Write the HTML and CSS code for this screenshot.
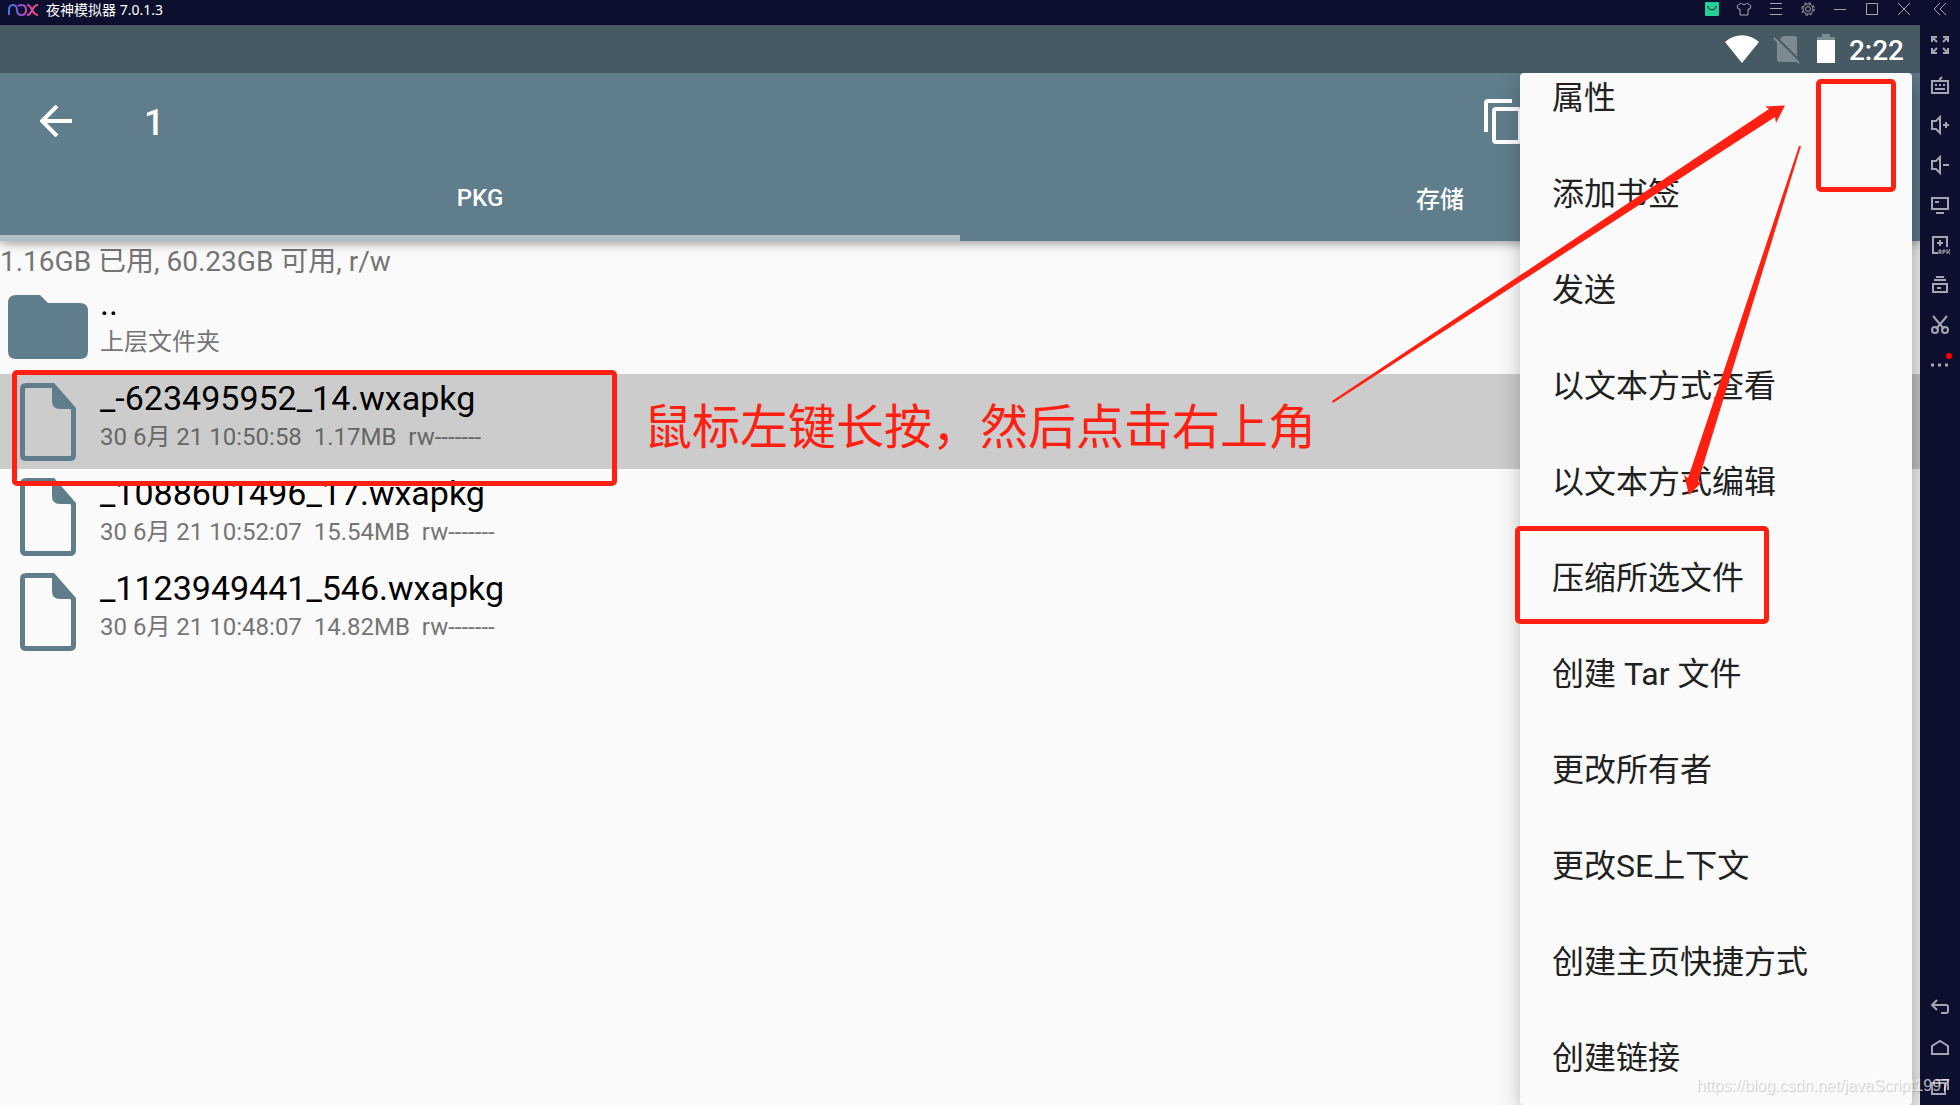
FILE: index.html
```html
<!DOCTYPE html>
<html lang="zh-CN">
  <head>
    <meta charset="utf-8">
    <title>夜神模拟器 7.0.1.3</title>
    <link rel="stylesheet" href="styles.css">
  </head>
  <body>
    <header class="titlebar">
      <svg class="logo" width="32" height="12" viewBox="0 0 32 12" fill="none" stroke-width="2">
        <defs>
          <linearGradient id="nox" gradientUnits="userSpaceOnUse" x1="0" y1="0" x2="32" y2="0">
            <stop offset="0" stop-color="#2f7bf5" />
            <stop offset="0.5" stop-color="#9a50c8" />
            <stop offset="0.75" stop-color="#e8468f" />
            <stop offset="1" stop-color="#e8468f" />
          </linearGradient>
        </defs>
        <path stroke="url(#nox)" d="M2 11V6Q2 1 6 1T10 6Q10 11 14.500 11T19 6Q19 1 14.500 1Q12 1 11 2M20 1C26 1 24 11 31 11M20 11C26 11 24 1 31 1" />
      </svg>
      <span class="app-name">夜神模拟器 7.0.1.3</span>
      <div class="window-buttons">
        <button aria-label="应用中心">
          <svg width="14" height="14" viewBox="0 0 14 14"><rect width="14" height="14" rx="1" fill="#26cf98" stroke="none" /><path d="M3 4c0 5 8 5 8 0" fill="none" stroke="#0c0f2e" /></svg>
        </button>
        <button aria-label="皮肤">
          <svg width="16" height="14" viewBox="0 0 16 14"><path d="M5 1L1 4l1 3h2v6h8V7h2l1-3-4-3c-1 2-5 2-6 0z" /></svg>
        </button>
        <button aria-label="菜单">
          <svg width="12" height="12" viewBox="0 0 12 12"><path d="M0 .5h12M0 5.500h12M0 11.500h12" /></svg>
        </button>
        <button aria-label="设置">
          <svg width="14" height="14" viewBox="0 0 14 14"><circle cx="7" cy="7" r="5" /><circle cx="7" cy="7" r="2.500" /><circle cx="7" cy="7" r="6.300" stroke-dasharray="2.500 2.450" /></svg>
        </button>
        <button aria-label="最小化">
          <svg width="12" height="12" viewBox="0 0 12 12"><path d="M0 6.500h12" /></svg>
        </button>
        <button aria-label="最大化">
          <svg width="12" height="12" viewBox="0 0 12 12"><path d="M.5.5h11v11H.5z" /></svg>
        </button>
        <button aria-label="关闭">
          <svg width="12" height="12" viewBox="0 0 12 12"><path d="M0 0l12 12M12 0L0 12" /></svg>
        </button>
        <button class="collapse" aria-label="收起">
          <svg width="14" height="12" viewBox="0 0 14 12"><path d="M7 0L1 6l6 6M13 0L7 6l6 6" /></svg>
        </button>
      </div>
    </header>

    <div class="emulator">
      <main class="screen">
        <div class="status-bar">
          <svg width="36" height="30" viewBox="0 0 36 30"><path d="M1 8C11-1 25-1 35 8L18 29z" fill="#fff" /></svg>
          <svg class="sim" width="28" height="30" viewBox="0 0 28 30"><path d="M11 2h12q2 0 2 2v22q0 2-2 2H7q-2 0-2-2V8z" fill="#7c8b92" /><path d="M3 2l25 25" stroke="#475a64" stroke-width="2" /><path d="M2 4l25 25" stroke="#7c8b92" stroke-width="2" /></svg>
          <svg class="battery" width="20" height="30" viewBox="0 0 20 30"><path d="M6 0h8v3h5v4H1V3h5z" fill="#7c8b92" /><path d="M1 6h18v23H1z" fill="#fff" /></svg>
          <span class="clock">2:22</span>
        </div>

        <div class="app-bar">
          <div class="toolbar">
            <button class="back" aria-label="返回">
              <svg width="32" height="32" viewBox="0 0 32 32"><path d="M32 16H3M17 1L2 16l15 15" fill="none" stroke="#fff" stroke-width="4" /></svg>
            </button>
            <span class="count">1</span>
            <button class="copy" aria-label="复制">
              <svg width="44" height="46" viewBox="0 0 44 46" fill="none" stroke="#fff" stroke-width="4"><path d="M2 33V4q0-2 2-2h24" /><rect x="10" y="10" width="26" height="33" rx="2" /></svg>
            </button>
          </div>
          <nav class="tabs">
            <button class="tab active">PKG</button>
            <button class="tab">存储</button>
          </nav>
        </div>

        <p class="disk-info">1.16GB 已用, 60.23GB 可用, r/w</p>
        <ul class="files">
          <li class="file">
            <svg width="80" height="64" viewBox="0 0 80 64"><path d="M8 0h24l8 8h32q8 0 8 8v40q0 8-8 8H8q-8 0-8-8V8q0-8 8-8z" fill="#607d8b" /></svg>
            <div class="file-text">
              <div class="file-name">..</div>
              <div class="file-meta">上层文件夹</div>
            </div>
          </li>
          <li class="file selected">
            <svg width="80" height="78" viewBox="0 0 80 78"><path d="M17 2.500h28L65.500 26v46q0 3.500-3.500 3.500H18q-3.500 0-3.500-3.500V6q0-3.500 3.500-3.500z" fill="none" stroke="#607d8b" stroke-width="5" /><path d="M44 2l23 24H52q-8 0-8-8z" fill="#607d8b" /></svg>
            <div class="file-text">
              <div class="file-name">_-623495952_14.wxapkg</div>
              <div class="file-meta">30 6月 21 10:50:58&nbsp; 1.17MB&nbsp; rw-------</div>
            </div>
          </li>
          <li class="file">
            <svg width="80" height="78" viewBox="0 0 80 78"><path d="M17 2.500h28L65.500 26v46q0 3.500-3.500 3.500H18q-3.500 0-3.500-3.500V6q0-3.500 3.500-3.500z" fill="none" stroke="#607d8b" stroke-width="5" /><path d="M44 2l23 24H52q-8 0-8-8z" fill="#607d8b" /></svg>
            <div class="file-text">
              <div class="file-name">_1088601496_17.wxapkg</div>
              <div class="file-meta">30 6月 21 10:52:07&nbsp; 15.54MB&nbsp; rw-------</div>
            </div>
          </li>
          <li class="file">
            <svg width="80" height="78" viewBox="0 0 80 78"><path d="M17 2.500h28L65.500 26v46q0 3.500-3.500 3.500H18q-3.500 0-3.500-3.500V6q0-3.500 3.500-3.500z" fill="none" stroke="#607d8b" stroke-width="5" /><path d="M44 2l23 24H52q-8 0-8-8z" fill="#607d8b" /></svg>
            <div class="file-text">
              <div class="file-name">_1123949441_546.wxapkg</div>
              <div class="file-meta">30 6月 21 10:48:07&nbsp; 14.82MB&nbsp; rw-------</div>
            </div>
          </li>
        </ul>

        <div class="menu">
          <div class="menu-list">
            <button>属性</button>
            <button>添加书签</button>
            <button>发送</button>
            <button>以文本方式查看</button>
            <button>以文本方式编辑</button>
            <button>压缩所选文件</button>
            <button>创建 Tar 文件</button>
            <button>更改所有者</button>
            <button>更改SE上下文</button>
            <button>创建主页快捷方式</button>
            <button>创建链接</button>
          </div>
        </div>
      </main>

      <aside class="sidebar">
        <button aria-label="全屏">
          <svg width="20" height="20" viewBox="0 0 20 20"><path d="M2 7V2h5M2 2l5 5M13 2h5v5M18 2l-5 5M2 13v5h5M2 18l5-5M18 13v5h-5M18 18l-5-5" /></svg>
        </button>
        <button aria-label="键盘">
          <svg width="20" height="20" viewBox="0 0 20 20"><path d="M2 6h16v12H2zM10 6V4l2-2M5 10h2M9 10h2M13 10h2M5 14h10" /></svg>
        </button>
        <button aria-label="音量加">
          <svg width="20" height="20" viewBox="0 0 20 20"><path d="M10 2v16l-4-4H2V6h4zM13 10h6M16 7v6" /></svg>
        </button>
        <button aria-label="音量减">
          <svg width="20" height="20" viewBox="0 0 20 20"><path d="M10 2v16l-4-4H2V6h4zM13 10h6" /></svg>
        </button>
        <button aria-label="屏幕">
          <svg width="20" height="20" viewBox="0 0 20 20"><path d="M2 3h16v11H2zM5 7h4M6 18h8" /></svg>
        </button>
        <button aria-label="安装APK">
          <svg width="20" height="20" viewBox="0 0 20 20"><path d="M8 18H3V2h14v10M7 8h6M10 5v6" /><path d="M9 19v-4h2v4M9 17h2M13 19v-4h2v2h-2M17 14v5M19.500 14v2l-2 1 2 1v1" stroke-width="1" /></svg>
        </button>
        <button aria-label="多开">
          <svg width="20" height="20" viewBox="0 0 20 20"><path d="M6 2h8M4 5h12M3 9h14v8H3zM7 13h4" /></svg>
        </button>
        <button aria-label="截图">
          <svg width="20" height="20" viewBox="0 0 20 20"><path d="M3 1l11 13M17 1L6 14" /><circle cx="5" cy="15" r="3" /><circle cx="15" cy="15" r="3" /></svg>
        </button>
        <button class="more" aria-label="更多">
          <svg width="20" height="20" viewBox="0 0 20 20"><path d="M1 10h3M8 10h3M15 10h3" stroke-width="3" /></svg>
        </button>
        <div class="nav-keys">
          <button aria-label="后退">
            <svg width="20" height="20" viewBox="0 0 20 20"><path d="M7 3L2 8l5 5M2 8h14q2 0 2 2v4q0 2-2 2h-5" /></svg>
          </button>
          <button aria-label="主页">
            <svg width="20" height="20" viewBox="0 0 20 20"><path d="M2 9l8-5 8 5v8H2z" /></svg>
          </button>
          <button aria-label="最近任务">
            <svg width="20" height="20" viewBox="0 0 20 20"><path d="M2 6h13v11H2zM6 3h12v10" /></svg>
          </button>
        </div>
      </aside>
    </div>

    <!-- red marks drawn over the window -->
    <div class="mark mark-file"></div>
    <div class="mark mark-more"></div>
    <div class="mark mark-zip"></div>
    <p class="note">鼠标左键长按，然后点击右上角</p>
    <svg class="arrows" width="480" height="400" viewBox="1330 100 480 400" fill="#ff2012">
      <path d="M1332 401L1769 109l-4-2.500 20-1-9 17.500-1-6L1333 403z" />
      <path d="M1799 146l-111 332-4-3 5 20 14-14-5 1L1801 146z" />
    </svg>
    <span class="watermark">https://blog.csdn.net/javaScript1997</span>
  </body>
</html>
```
FILE: styles.css
```css
* {
  box-sizing: border-box;
}
body {
  position: relative;
  display: flex;
  flex-direction: column;
  height: 100vh;
  margin: 0;
  overflow: hidden;
  font-family: Roboto, "Noto Sans CJK SC", sans-serif;
  background: #0c0f2e;
}
button {
  padding: 0;
  border: none;
  background: none;
  font: inherit;
  color: inherit;
  cursor: pointer;
}
svg {
  display: block;
  flex: none;
}
p,
ul {
  margin: 0;
  padding: 0;
  list-style: none;
}

/* emulator window */
.titlebar {
  display: flex;
  align-items: flex-start;
  height: 25px;
  padding-left: 7px;
  color: #fff;
}
.logo {
  margin-top: 4px;
}
.app-name {
  margin-left: 7px;
  font-family: "Noto Sans", "Noto Sans CJK SC", sans-serif;
  font-size: 14px;
  line-height: 20px;
}
.window-buttons {
  display: flex;
  margin-left: auto;
}
.window-buttons button {
  display: flex;
  align-items: center;
  justify-content: center;
  width: 32px;
  height: 18px;
}
.window-buttons .collapse {
  width: 40px;
}
.window-buttons svg {
  fill: none;
  stroke: #a5a6b4;
}
.emulator {
  display: flex;
  flex: 1;
  min-height: 0;
}
.screen {
  position: relative;
  flex: 1;
  overflow: hidden;
  background: #fafafa;
}

/* android */
.status-bar {
  position: relative;
  z-index: 1;
  display: flex;
  align-items: center;
  justify-content: flex-end;
  height: 48px;
  padding-right: 16px;
  background: #475a64;
  color: #fff;
}
.sim {
  margin-left: 12px;
}
.battery {
  margin-left: 16px;
}
.clock {
  margin-left: 13px;
  padding-top: 2px;
  font-size: 28px;
  font-weight: 500;
}
.app-bar {
  position: relative;
  background: #607d8b;
  box-shadow: 0 2px 10px rgba(0, 0, 0, 0.4);
  color: #fff;
}
.toolbar {
  display: flex;
  align-items: center;
  height: 96px;
  padding-left: 40px;
}
.count {
  margin-left: 72px;
  padding-top: 4px;
  font-size: 36px;
  font-weight: 500;
}
.copy {
  margin-left: auto;
  margin-right: 392px;
  padding-top: 2px;
}
.tabs {
  display: flex;
}
.tab {
  flex: 1;
  height: 72px;
  padding-bottom: 9px;
  border-bottom: 6px solid transparent;
  font-size: 24px;
  font-weight: 500;
}
.tab.active {
  border-bottom-color: #b0bec5;
}
.disk-info {
  height: 38px;
  font-size: 28px;
  line-height: 42px;
  color: #757575;
}
.file {
  display: flex;
  align-items: center;
  height: 95px;
  padding-left: 8px;
}
.file.selected {
  background: #ccc;
}
.file-text {
  margin-left: 12px;
  padding-bottom: 11px;
}
.file-name {
  font-size: 34px;
  line-height: 42px;
  color: #000;
}
.file-meta {
  font-size: 24px;
  line-height: 36px;
  color: #757575;
}
.selected .file-meta {
  color: #666;
}
.menu {
  position: absolute;
  top: 48px;
  right: 8px;
  bottom: 0;
  width: 392px;
  overflow: hidden;
  border-radius: 4px;
  background: #fafafa;
  box-shadow: 4px 8px 24px rgba(0, 0, 0, 0.35);
}
.menu-list {
  margin-top: -23px;
}
.menu button {
  display: block;
  width: 100%;
  height: 96px;
  padding-bottom: 6px;
  padding-left: 32px;
  font-size: 32px;
  text-align: left;
  color: #212121;
}

/* emulator tools */
.sidebar {
  display: flex;
  flex-direction: column;
  width: 40px;
}
.sidebar button {
  display: flex;
  align-items: center;
  justify-content: center;
  width: 40px;
  height: 40px;
}
.sidebar svg {
  fill: none;
  stroke: #a5a6b4;
  stroke-width: 2;
}
.sidebar .more {
  position: relative;
}
.more::after {
  content: "";
  position: absolute;
  top: 8px;
  right: 8px;
  width: 6px;
  height: 6px;
  border-radius: 50%;
  background: #f00;
}
.nav-keys {
  margin-top: auto;
}
.nav-keys button {
  padding-top: 4px;
}

/* marks */
.mark {
  position: absolute;
  border: 5px solid #ff2012;
  border-radius: 5px;
}
.mark-file {
  top: 370px;
  left: 12px;
  width: 605px;
  height: 116px;
}
.mark-more {
  top: 79px;
  right: 64px;
  width: 80px;
  height: 113px;
}
.mark-zip {
  top: 526px;
  right: 191px;
  width: 254px;
  height: 98px;
}
.note {
  position: absolute;
  top: 388px;
  left: 644px;
  font-family: "Noto Sans CJK SC", sans-serif;
  font-size: 48px;
  line-height: 70px;
  color: #ff2012;
}
.arrows {
  position: absolute;
  top: 100px;
  right: 150px;
}
.watermark {
  position: absolute;
  right: 10px;
  bottom: 9px;
  font-family: "Liberation Sans", Arial, sans-serif;
  font-size: 16px;
  line-height: 20px;
  color: rgba(255, 255, 255, 0.7);
  text-shadow: 1px 1px 1px rgba(0, 0, 0, 0.2);
}
```
